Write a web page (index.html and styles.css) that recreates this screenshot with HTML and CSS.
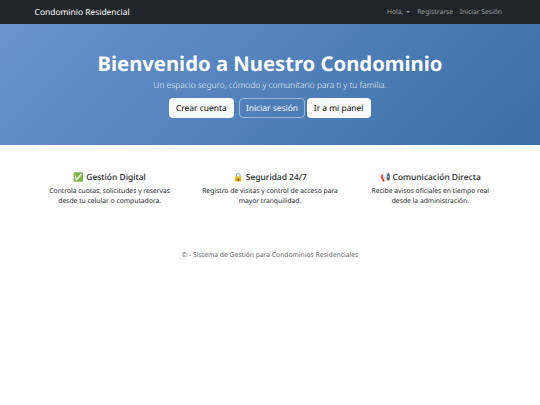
FILE: index.html
```html
<!DOCTYPE html>
<html lang="es">
<head>
<meta charset="utf-8">
<title>Condominio Residencial</title>
<link rel="stylesheet" href="styles.css">
</head>
<body>
<nav class="navbar">
  <div class="container navbar-inner">
    <a class="brand">Condominio Residencial</a>
    <ul class="nav-links">
      <li class="dropdown">Hola,</li>
      <li>Registrarse</li>
      <li>Iniciar Sesión</li>
    </ul>
  </div>
</nav>
<header class="hero">
  <h1>Bienvenido a Nuestro Condominio</h1>
  <p class="lead">Un espacio seguro, cómodo y comunitario para ti y tu familia.</p>
  <div class="actions">
    <a class="btn btn-light btn-first">Crear cuenta</a>
    <a class="btn btn-outline">Iniciar sesión</a>
    <a class="btn btn-light">Ir a mi panel</a>
  </div>
</header>
<main class="container features">
  <section class="feature">
    <h5>✅ Gestión Digital</h5>
    <p>Controla cuotas, solicitudes y reservas desde tu celular o computadora.</p>
  </section>
  <section class="feature">
    <h5>🔒 Seguridad 24/7</h5>
    <p>Registro de visitas y control de acceso para mayor tranquilidad.</p>
  </section>
  <section class="feature">
    <h5>📢 Comunicación Directa</h5>
    <p>Recibe avisos oficiales en tiempo real desde la administración.</p>
  </section>
</main>
<footer class="footer">© - Sistema de Gestión para Condominios Residenciales</footer>
</body>
</html>
```
FILE: styles.css
```css
html {
  font-size: 6.75px;
}

*,
*::before,
*::after {
  box-sizing: border-box;
}

body {
  margin: 0;
  font: 400 1rem/1.5 "Noto Sans", "Liberation Sans", sans-serif;
  color: #212529;
  background: #fff;
  text-rendering: geometricPrecision;
}

h1,
h5,
p,
ul {
  margin: 0;
  padding: 0;
}

.container {
  width: 71.25rem;
  margin: 0 auto;
  padding: 0 0.75rem;
}

.navbar {
  height: 3.5rem;
  background: #212529;
}

.navbar-inner {
  display: flex;
  align-items: center;
  justify-content: space-between;
  height: 100%;
}

.brand {
  padding-top: 3px;
  font-size: 1.25rem;
  color: #fff;
}

.nav-links {
  display: flex;
  gap: 1rem;
  padding-right: 0.5rem;
  padding-top: 1px;
  list-style: none;
  color: rgba(255, 255, 255, 0.55);
}

.dropdown::after {
  content: "";
  display: inline-block;
  margin-left: 0.45rem;
  vertical-align: 0.255em;
  border-top: 2px solid;
  border-right: 2px solid transparent;
  border-left: 2px solid transparent;
}

.hero {
  height: 121.4px;
  padding: 4rem 0 0;
  text-align: center;
  color: #fff;
  background: linear-gradient(135deg, #6a93cf, #3a6ea5);
}

.hero h1 {
  margin-bottom: 0.5rem;
  font-size: 3rem;
  font-weight: 700;
  line-height: 1.2;
}

.lead {
  padding-top: 2.2px;
  margin-bottom: calc(1rem - 2.2px);
  font-size: 1.25rem;
  font-weight: 300;
  color: rgba(255, 255, 255, 0.9);
}

.actions {
  display: flex;
  justify-content: center;
  gap: 0.22rem;
  padding-right: 0.5px;
}

.btn {
  height: 3rem;
  padding: 0.65rem 0.91rem 0;
  border: 1px solid transparent;
  border-radius: 4px;
  font-size: 1.25rem;
  line-height: 1.5;
}

.btn-first {
  margin-right: 0.5rem;
}

.btn-light {
  color: #000;
  background: #f8f9fa;
}

.btn-outline {
  color: #f8f9fa;
  border-color: rgba(248, 249, 250, 0.45);
}

.features {
  display: grid;
  grid-template-columns: repeat(3, 1fr);
  padding: 3rem 0;
  text-align: center;
}

.feature {
  padding: 1.2rem 1.75rem 1rem;
}

.feature h5 {
  margin-bottom: 0.4rem;
  font-size: 1.25rem;
  font-weight: 500;
  line-height: 1.2;
}

.footer {
  padding: 2.4rem 0;
  text-align: center;
  color: rgba(33, 37, 41, 0.75);
}
```
